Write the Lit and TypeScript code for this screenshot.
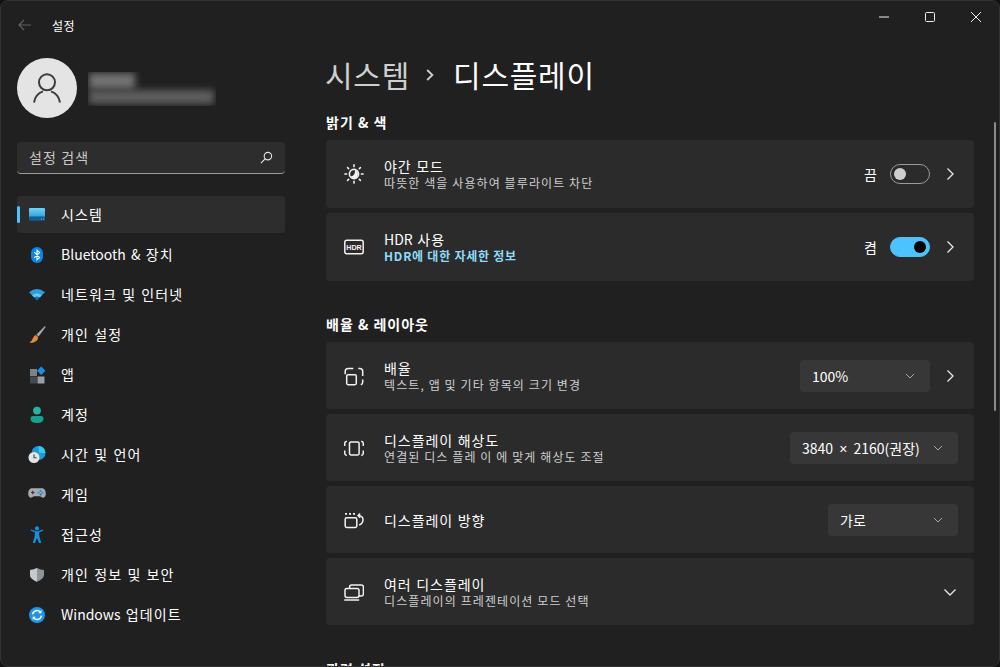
import { LitElement, html, css, svg } from "lit";
import { customElement } from "lit/decorators.js";

const chevR = html`<svg class="chev" viewBox="0 0 16 16"><path d="M5.5 2.5 L11 8 L5.5 13.5" fill="none" stroke="#e8e8e8" stroke-width="1.3"/></svg>`;
const chevD = html`<svg class="chev" viewBox="0 0 16 16"><path d="M2.5 5.5 L8 11 L13.5 5.5" fill="none" stroke="#e8e8e8" stroke-width="1.3"/></svg>`;
const ddChev = html`<svg class="ddchev" viewBox="0 0 10 10"><path d="M1 3 L5 7 L9 3" fill="none" stroke="#a8a8a8" stroke-width="1"/></svg>`;

const navIcons: Record<string, unknown> = {
  system: svg`<defs><linearGradient id="g1" x1="0" y1="0" x2="0" y2="1"><stop offset="0" stop-color="#6fd6f6"/><stop offset=".65" stop-color="#3aa6d8"/><stop offset="1" stop-color="#0b5a8c"/></linearGradient></defs>
    <rect x="2" y="3" width="16" height="12.5" rx="1.2" fill="url(#g1)"/><rect x="2" y="11.5" width="16" height="4" rx="1" fill="#0f5f94"/><rect x="14" y="13.6" width="1" height="1" fill="#9ad"/><rect x="16" y="13.6" width="1" height="1" fill="#9ad"/>`,
  bt: svg`<rect x="4" y="2" width="12" height="16" rx="6" fill="#0a84e8"/><path d="M7.2 7.2 L12.6 12.4 L10 14.8 V5.2 L12.6 7.6 L7.2 12.8" fill="none" stroke="#fff" stroke-width="1.1"/>`,
  wifi: svg`<path d="M2 7.2 Q10 .6 18 7.2 L15.2 10 Q10 6.2 4.8 10 Z" fill="#2a9fe0"/><path d="M4.8 10 Q10 6.2 15.2 10 L12.9 12.6 Q10 10.8 7.1 12.6 Z" fill="#5ccaf5"/><path d="M7.1 12.6 Q10 10.8 12.9 12.6 L10 15.6 Z" fill="#0a6fc4"/>`,
  brush: svg`<path d="M18 1 L9.5 9.5 L11.6 11.6 L18.6 2 Z" fill="#a9a9b0"/><path d="M9 10 C5.5 11 6.5 15 2.5 17.6 C7 18.6 11.5 15.6 11 12 Z" fill="#e8893a"/>`,
  apps: svg`<rect x="3" y="4" width="7" height="7" fill="#7d8286"/><rect x="3" y="11.5" width="7" height="7" fill="#45484c"/><rect x="10.5" y="11.5" width="7" height="7" fill="#9a9fa3"/><path d="M14.2 1.5 L18.4 5.7 L14.2 9.9 L10 5.7 Z" fill="#1d8fe0"/>`,
  account: svg`<circle cx="10" cy="5.6" r="3.9" fill="#28b5a0"/><path d="M3.5 13.5 Q3.5 11 6 11 H14 Q16.5 11 16.5 13.5 Q16.5 18 10 18 Q3.5 18 3.5 13.5 Z" fill="#18a08e"/>`,
  time: svg`<circle cx="11.5" cy="8" r="7" fill="#1c9ad6"/><path d="M11.5 1 A7 7 0 0 1 18.5 8 H12 Z" fill="#38c8e8"/><circle cx="7" cy="12.5" r="5.5" fill="#e4e4e4"/><path d="M7 9.5 V12.8 H9.6" fill="none" stroke="#444" stroke-width="1.1"/>`,
  game: svg`<g transform="translate(0 -1.2)"><path d="M5 4.5 H15 C17.5 4.5 18.8 7 18.8 10 C18.8 13 17 14.5 15.4 13.6 L13 12.4 H7 L4.6 13.6 C3 14.5 1.2 13 1.2 10 C1.2 7 2.5 4.5 5 4.5 Z" fill="#a6abb0"/><path d="M5.8 7 V10.4 M4.1 8.7 H7.5" stroke="#2e3236" stroke-width="1.1"/><rect x="12.8" y="6.2" width="1.8" height="1.8" fill="#1f8fe0"/><rect x="10.8" y="8" width="1.8" height="1.8" fill="#1f8fe0"/><rect x="14.6" y="8" width="1.8" height="1.8" fill="#1f8fe0"/><rect x="12.8" y="9.8" width="1.8" height="1.8" fill="#1f6fb0"/></g>`,
  a11y: svg`<circle cx="10" cy="3.4" r="2.1" fill="#1a8fe0"/><path d="M3.5 5.6 L8 7.6 L7.6 11.5 L5.8 18 H8 L10 13 L12 18 H14.2 L12.4 11.5 L12 7.6 L16.5 5.6 L15.9 4.4 L11 6.2 H9 L4.1 4.4 Z" fill="#1a8fe0"/>`,
  shield: svg`<path d="M10 3 Q13.5 5 17 5 V9.8 Q17 14 10 16.8 Q3 14 3 9.8 V5 Q6.5 5 10 3 Z" fill="#8f9499"/><path d="M10 3 Q6.5 5 3 5 V9.8 Q3 14 10 16.8 Z" fill="#c6cacd"/>`,
  update: svg`<circle cx="10" cy="10" r="8" fill="#1f95e4"/><path d="M5.6 9.4 A4.5 4.5 0 0 1 13.4 7 M14.4 10.6 A4.5 4.5 0 0 1 6.6 13" fill="none" stroke="#fff" stroke-width="1.4"/><path d="M14.4 5 V8.2 H11.2 Z M5.6 15 V11.8 H8.8 Z" fill="#fff"/>`,
};

const nav: [string, string][] = [
  ["system", "시스템"], ["bt", "Bluetooth & 장치"], ["wifi", "네트워크 및 인터넷"], ["brush", "개인 설정"],
  ["apps", "앱"], ["account", "계정"], ["time", "시간 및 언어"], ["game", "게임"],
  ["a11y", "접근성"], ["shield", "개인 정보 및 보안"], ["update", "Windows 업데이트"],
];

const cardIcons = {
  night: svg`<g fill="none" stroke="#f2f2f2" stroke-width="1.6" stroke-linecap="round"><circle cx="10" cy="10" r="4.6"/><path d="M10 .9V2.6M10 17.4V19.1M.9 10H2.6M17.4 10H19.1M3.6 3.6L4.7 4.7M15.3 15.3L16.4 16.4M3.6 16.4L4.7 15.3M15.3 4.7L16.4 3.6"/></g><path d="M11 6 A4.4 4.4 0 0 1 13 13 A4.4 4.4 0 0 1 6.6 12.6 Q11.5 11.5 11 6Z" fill="#f2f2f2"/>`,
  hdr: svg`<rect x="0.8" y="3.3" width="18.4" height="13.4" rx="2" fill="none" stroke="#f2f2f2" stroke-width="1.5"/><text x="10" y="12.7" text-anchor="middle" font-family="Liberation Sans" font-size="7.2" font-weight="700" fill="#f2f2f2">HDR</text>`,
  scale: svg`<g fill="none" stroke="#f2f2f2" stroke-width="1.5"><rect x="2.7" y="8.7" width="9.6" height="10" rx="1.4"/><path d="M1.2 8.2V5.2Q1.2 2.4 4.2 2.4H9.3M14.3 2.4H15.8Q18.7 2.4 18.7 5.2V10M18.7 13.4V16.2Q18.7 18 16.8 18.8"/></g>`,
  res: svg`<g fill="none" stroke="#f2f2f2" stroke-width="1.5"><rect x="5.5" y="3.9" width="9.6" height="13" rx="1.4"/><path d="M2.8 3.3Q.7 3.7 .7 5.6V8M.7 12.4V15.2Q.7 17 2.8 17.5M17.2 3.3Q19.3 3.7 19.3 5.6V8M19.3 12.4V15.2Q19.3 17 17.2 17.5"/></g>`,
  orient: svg`<g fill="none" stroke="#f2f2f2" stroke-width="1.5"><rect x="1.2" y="7.8" width="11.6" height="9.6" rx="1.4"/><path d="M1 3.8H3M5 3.8H7M9 3.8H11" stroke-width="1.7"/><path d="M14.2 5.6Q19 5.8 19 10Q19 13.4 15.2 15"/><path d="M16.2 3.4L14 5.6L16.2 7.8" stroke-width="1.4"/></g>`,
  multi: svg`<g fill="none" stroke="#f2f2f2" stroke-width="1.5"><rect x="5.6" y="2.9" width="13.8" height="11" rx="2"/><rect x="1" y="6.4" width="14" height="9" rx="1.8" fill="#2b2b2b"/><path d="M.2 18H15.2"/></g>`,
};

type Row = { icon: unknown; title: unknown; desc?: string; link?: boolean; ctrl: unknown };
const toggle = (label: string, on: boolean) => html`<span class="state">${label}</span>
  <span class="toggle ${on ? "on" : ""}"><i></i></span><span class="chevbox">${chevR}</span>`;
const dd = (label: unknown, cls: string, chev = false) => html`<span class="dd ${cls}"><span>${label}</span>${ddChev}</span>${chev ? html`<span class="chevbox">${chevR}</span>` : ""}`;
const lat = (l: string) => l.split(/([A-Za-z&]+)/).map((p, i) => (i % 2 ? html`<span class="lat">${p}</span>` : p));

const sec1: Row[] = [
  { icon: cardIcons.night, title: "야간 모드", desc: "따뜻한 색을 사용하여 블루라이트 차단", ctrl: toggle("끔", false) },
  { icon: cardIcons.hdr, title: lat("HDR 사용"), desc: "HDR에 대한 자세한 정보", link: true, ctrl: toggle("켬", true) },
];
const sec2: Row[] = [
  { icon: cardIcons.scale, title: "배율", desc: "텍스트, 앱 및 기타 항목의 크기 변경", ctrl: dd("100%", "w130", true) },
  { icon: cardIcons.res, title: "디스플레이 해상도", desc: "연결된 디스 플레 이 에 맞게 해상도 조절", ctrl: dd(html`<span class="res">3840 <span class="x">×</span> 2160(권장)</span>`, "w168") },
  { icon: cardIcons.orient, title: "디스플레이 방향", ctrl: dd("가로", "w130") },
  { icon: cardIcons.multi, title: "여러 디스플레이", desc: "디스플레이의 프레젠테이션 모드 선택", ctrl: html`<span class="chevbox">${chevD}</span>` },
];

@customElement("app-root")
export class AppRoot extends LitElement {
  static styles = css`
    :host { display: block; width: 1000px; height: 667px; background: #111; overflow: hidden;
      font-family: "Noto Sans CJK KR", "Open Sans", sans-serif; color: #fff; font-size: 14px; }
    .win { position: relative; box-sizing: border-box; width: 1000px; height: 667px; background: #202020;
      border: 1px solid #323232; border-radius: 8px; overflow: hidden; display: flex; }
    .side { width: 325px; flex: none; box-sizing: border-box; padding: 0 0 0 16px; }
    .bar { height: 48px; display: flex; align-items: center; }
    .bar svg { width: 16px; height: 16px; }
    .bar span { font-size: 12px; margin-left: 19px; letter-spacing: .5px; }
    .profile { display: flex; margin-top: 9px; height: 60px; align-items: center; }
    .avatar { width: 60px; height: 60px; border-radius: 50%; background: #e4e4e4; display: flex; align-items: center; justify-content: center; flex: none; }
    .avatar svg { width: 30px; height: 30px; }
    .blurbox { width: 128px; height: 34px; margin-left: 11px; overflow: hidden; display: flex; flex-direction: column; margin-top: 2px; }
    .blurbox i { display: block; background: #727272; filter: blur(3.5px); }
    .blurbox .b1 { width: 46px; height: 16px; margin: 1px 0 0 1px; }
    .blurbox .b2 { width: 125px; height: 14px; margin: 1px 0 0 1px; background: #5e5e5e; }
    .search { width: 268px; height: 32px; box-sizing: border-box; margin-top: 24px; background: #2d2d2d; border-bottom: 1px solid #9a9a9a;
      border-radius: 4px; display: flex; align-items: center; justify-content: space-between; padding: 0 12px 1px; color: #c8c8c8; letter-spacing: 1.1px; }
    .search svg { width: 13px; height: 13px; }
    .nav { margin-top: 22px; display: flex; flex-direction: column; gap: 3px; width: 268px; }
    .item { position: relative; height: 37px; display: flex; align-items: center; border-radius: 4px; padding-left: 10px; letter-spacing: 1.1px; word-spacing: 1px; }
    .item.sel { background: #2d2d2d; }
    .item.sel::before { content: ""; position: absolute; left: 0; top: 10px; width: 3px; height: 17px; border-radius: 2px; background: #4cc2ff; }
    .item svg { width: 20px; height: 20px; flex: none; margin-right: 14px; }
    .item > span { margin-bottom: 2px; }
    .lat { letter-spacing: 0; }
    .main { flex: 1; min-width: 0; box-sizing: border-box; padding: 0 25px 0 0; }
    h1 { margin: 0 0 0 -1px; height: 111px; box-sizing: border-box; padding-top: 48px; font-size: 30px; font-weight: 400; line-height: 50px; letter-spacing: 0.75px; display: flex; align-items: flex-start; }
    h1 .p { color: #cfcfcf; }
    h1 svg { width: 8px; height: 12px; margin: 20px 19px 0 16px; flex: none; }
    h2 { margin: 0; font-size: 14px; font-weight: 700; line-height: 20px; height: 28px; letter-spacing: 1px; }
    .cards { display: flex; flex-direction: column; gap: 5px; }
    .card { height: 68px; box-sizing: border-box; background: #2b2b2b; border-radius: 4px; display: flex; align-items: center; padding: 0 16px 0 18px; }
    .cards.c67 .card { height: 67px; }
    .card > svg { width: 20px; height: 20px; flex: none; margin-right: 20px; }
    .txt { flex: 1; min-width: 0; display: flex; flex-direction: column; }
    .txt.two { padding-bottom: 0; }
    .t { font-size: 14px; line-height: 18px; letter-spacing: .95px; word-spacing: .5px; }
    .d { font-size: 12px; line-height: 16px; color: #cfcfcf; letter-spacing: 1.1px; }
    .d.link { color: #8fdcf8; font-weight: 700; letter-spacing: .75px; }
    .state { margin-right: 13px; }
    .toggle { width: 40px; height: 20px; box-sizing: border-box; border-radius: 10px; border: 1px solid #9a9a9a; display: flex; align-items: center; padding: 0 3px; }
    .toggle i { width: 12px; height: 12px; border-radius: 50%; background: #cfcfcf; }
    .toggle.on { background: #4cc2ff; border-color: #4cc2ff; justify-content: flex-end; }
    .toggle.on i { background: #000; }
    .chevbox { width: 28px; display: flex; justify-content: flex-end; }
    .chev { width: 16px; height: 16px; }
    .dd { height: 32px; box-sizing: border-box; background: #373737; border-radius: 4px; display: flex; align-items: center; justify-content: space-between; padding: 0 15px 0 12px; }
    .dd.w130 { width: 130px; } .dd.w168 { width: 168px; }
    .res { word-spacing: 3px; }
    .x { font-family: "Liberation Sans", sans-serif; }
    .ddchev { width: 10px; height: 10px; }
    .sp { height: 33px; }
    .ctl { position: absolute; top: 0; right: 0; display: flex; }
    .ctl div { width: 46px; height: 32px; display: flex; align-items: center; justify-content: center; }
    .ctl svg { width: 10px; height: 10px; }
    .sb { position: absolute; right: 3px; top: 121px; width: 2px; height: 289px; border-radius: 1px; background: #8a8a8a; }
    .partial { margin-top: 34px; }
  `;

  render() {
    const row = (r: Row) => html`<div class="card"><svg viewBox="0 0 20 20">${r.icon}</svg>
      <div class="txt ${r.desc ? "two" : ""}"><span class="t">${r.title}</span>${r.desc ? html`<span class="d ${r.link ? "link" : ""}">${r.desc}</span>` : ""}</div>${r.ctrl}</div>`;
    return html`<div class="win">
      <aside class="side">
        <div class="bar"><svg viewBox="0 0 16 16"><path d="M14 8H2M7 3L2 8L7 13" fill="none" stroke="#5f5f5f" stroke-width="1.2"/></svg><span>설정</span></div>
        <div class="profile">
          <div class="avatar"><svg viewBox="0 0 30 30"><circle cx="15" cy="9.3" r="8" fill="none" stroke="#3c3c3c" stroke-width="2"/><path d="M2 29.5 C3 23.5 7 19.8 11 18.4 M28 29.5 C27 23.5 23 19.8 19 18.4" fill="none" stroke="#3c3c3c" stroke-width="2"/></svg></div>
          <div class="blurbox"><i class="b1"></i><i class="b2"></i></div>
        </div>
        <div class="search"><span>설정 검색</span><svg viewBox="0 0 14 14"><circle cx="8.5" cy="5.5" r="4" fill="none" stroke="#e0e0e0" stroke-width="1.2"/><path d="M5.5 8.5L1 13" stroke="#e0e0e0" stroke-width="1.3"/></svg></div>
        <nav class="nav">${nav.map(([k, l], i) => html`<div class="item ${i === 0 ? "sel" : ""}"><svg viewBox="0 0 20 20">${navIcons[k]}</svg><span>${lat(l)}</span></div>`)}</nav>
      </aside>
      <main class="main">
        <h1><span class="p">시스템</span><svg viewBox="0 0 8 12"><path d="M1.2 1L6.4 6L1.2 11" fill="none" stroke="#cfcfcf" stroke-width="1.8"/></svg><span>디스플레이</span></h1>
        <h2>밝기 & 색</h2>
        <div class="cards">${sec1.map(row)}</div>
        <div class="sp"></div>
        <h2>배율 & 레이아웃</h2>
        <div class="cards c67">${sec2.map(row)}</div>
        <h2 class="partial">관련 설정</h2>
      </main>
      <div class="ctl">
        <div><svg viewBox="0 0 10 10"><path d="M0 5H10" stroke="#eee" stroke-width="1"/></svg></div>
        <div><svg viewBox="0 0 10 10"><rect x=".5" y=".5" width="9" height="9" rx="1" fill="none" stroke="#eee" stroke-width="1"/></svg></div>
        <div><svg viewBox="0 0 10 10"><path d="M0 0L10 10M10 0L0 10" stroke="#eee" stroke-width="1"/></svg></div>
      </div>
      <div class="sb"></div>
    </div>`;
  }
}
